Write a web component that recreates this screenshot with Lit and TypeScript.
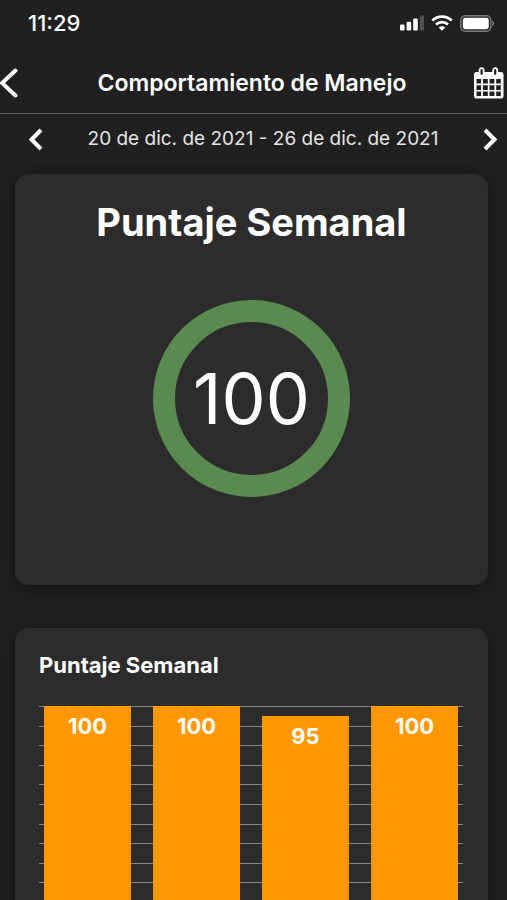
import { LitElement, html, css, svg } from "lit";
import { customElement, property } from "lit/decorators.js";

const chevron = (direction: "left" | "right") => svg`
  <path
    d=${direction === "left" ? "M15 5 L5.5 14.5 L15 24" : "M5 5 L14.5 14.5 L5 24"}
    fill="none" stroke="currentColor" stroke-width="4" stroke-linecap="butt" stroke-linejoin="miter" />
`;

@customElement("status-bar")
class StatusBar extends LitElement {
  static styles = css`
    :host {
      display: flex;
      align-items: center;
      justify-content: space-between;
      height: 46px;
      padding: 0 12px 0 28px;
    }
    .time {
      font-size: 22px;
      font-weight: 500;
      line-height: 24px;
    }
    .indicators {
      display: flex;
      align-items: center;
      gap: 7px;
    }
    svg {
      display: block;
    }
  `;

  render() {
    return html`
      <span class="time">11:29</span>
      <div class="indicators">
        <svg width="24" height="16" viewBox="0 0 24 16" fill="#fff" role="img" aria-label="Señal">
          <rect x="0" y="9.5" width="4.6" height="6" rx="1.2" />
          <rect x="6.6" y="6.8" width="4.6" height="8.7" rx="1.2" />
          <rect x="13.2" y="3.5" width="4.6" height="12" rx="1.2" />
          <rect x="19.8" y="0.3" width="4.2" height="15.2" rx="1.2" fill="#505050" />
        </svg>
        <svg width="22" height="16" viewBox="0 0 22 16" fill="none" stroke="#fff" stroke-width="2.8" role="img" aria-label="Wi-Fi">
          <path d="M1.3 5.6 C6.6 0.3 15.4 0.3 20.7 5.6" />
          <path d="M5 9.6 C8.4 6.4 13.6 6.4 17 9.6" />
          <path d="M11 15.8 L7.6 12.4 C9.6 10.7 12.4 10.7 14.4 12.4 Z" fill="#fff" stroke="none" />
        </svg>
        <svg width="35" height="17" viewBox="0 0 35 17" role="img" aria-label="Batería">
          <rect x="0.8" y="0.8" width="30" height="15.4" rx="4.4" fill="none" stroke="#7c7c7c" stroke-width="1.4" />
          <rect x="2.8" y="2.8" width="26" height="11.4" rx="2.4" fill="#fff" />
          <path d="M32.3 5.6 C34.8 6.6 34.8 10.4 32.3 11.4 Z" fill="#7c7c7c" />
        </svg>
      </div>
    `;
  }
}

@customElement("score-ring")
class ScoreRing extends LitElement {
  @property({ type: Number }) value = 0;

  static styles = css`
    :host {
      display: grid;
      place-items: center;
      box-sizing: border-box;
      width: 197px;
      height: 197px;
      border: 22px solid #5a8a4f;
      border-radius: 50%;
    }
    .value {
      font-size: 70px;
      line-height: 80px;
      font-weight: 400;
    }
  `;

  render() {
    return html`<span class="value">${this.value}</span>`;
  }
}

@customElement("score-chart")
class ScoreChart extends LitElement {
  @property({ attribute: false }) values: number[] = [];

  static styles = css`
    :host {
      display: grid;
      height: 197px;
    }
    .grid,
    .bars {
      grid-area: 1 / 1;
    }
    .grid {
      display: flex;
      flex-direction: column;
      justify-content: space-between;
    }
    .line {
      height: 1px;
      background: #858585;
    }
    .bars {
      display: grid;
      grid-auto-flow: column;
      grid-auto-columns: 1fr;
      align-items: end;
      gap: 22px;
      padding: 0 5px;
    }
    .bar {
      box-sizing: border-box;
      padding-top: 6px;
      background: #ff9800;
      font-size: 22px;
      line-height: 28px;
      font-weight: 700;
      text-align: center;
    }
  `;

  render() {
    return html`
      <div class="grid">${Array.from({ length: 11 }, () => html`<div class="line"></div>`)}</div>
      <div class="bars">
        ${this.values.map((v) => html`<div class="bar" style="height:${v}%">${v}</div>`)}
      </div>
    `;
  }
}

@customElement("app-root")
class AppRoot extends LitElement {
  static styles = css`
    :host {
      display: flex;
      flex-direction: column;
      height: 100vh;
      overflow: hidden;
      background: #202020;
      color: #fff;
      font-family: Inter, "Liberation Sans", sans-serif;
    }
    button {
      display: block;
      padding: 0;
      border: 0;
      background: none;
      color: inherit;
      cursor: pointer;
    }
    svg {
      display: block;
    }
    .header {
      display: flex;
      align-items: center;
      justify-content: space-between;
      height: 68px;
      padding-right: 3px;
      box-sizing: border-box;
      padding-top: 6px;
      border-bottom: 1px solid #5c5c5c;
      flex: none;
    }
    .side {
      flex: 0 0 32px;
    }
    .title {
      margin: 0;
      font-size: 23px;
      line-height: 32px;
      font-weight: 600;
      white-space: nowrap;
    }
    .period {
      display: flex;
      align-items: center;
      justify-content: space-between;
      height: 50px;
      padding: 0 7px 0 26px;
      flex: none;
    }
    .range {
      color: #e4e4e4;
      font-size: 19px;
      line-height: 28px;
      white-space: nowrap;
    }
    .content {
      flex: 1;
      min-height: 0;
      overflow-y: auto;
      scrollbar-width: none;
      display: flex;
      flex-direction: column;
      gap: 43px;
      padding: 10px 19px 24px 15px;
    }
    .card {
      flex: none;
      border-radius: 14px;
      background: #2c2c2c;
      box-shadow: 0 4px 20px rgba(0, 0, 0, 0.45);
    }
    .summary {
      display: flex;
      flex-direction: column;
      align-items: center;
      gap: 54px;
      padding: 24px 24px 88px;
    }
    .headline {
      margin: 0;
      font-size: 38px;
      line-height: 48px;
      font-weight: 700;
    }
    .history {
      padding: 22px 25px 40px 24px;
    }
    .subhead {
      margin: 0 0 26px;
      font-size: 22px;
      line-height: 30px;
      font-weight: 700;
    }
  `;

  render() {
    return html`
      <status-bar></status-bar>
      <header class="header">
        <div class="side">
          <button aria-label="Volver">
            <svg width="20" height="32" viewBox="0 0 20 32">
              <path d="M15.5 3.5 L2 16 L15.5 28.5" fill="none" stroke="#fff" stroke-width="4" stroke-linecap="round" stroke-linejoin="miter" />
            </svg>
          </button>
        </div>
        <h1 class="title">Comportamiento de Manejo</h1>
        <div class="side">
          <button aria-label="Calendario">
            <svg width="32" height="32" viewBox="0 0 32 32">
              <path
                fill="#fff" fill-rule="evenodd"
                d="M4.5 5 H29 Q31.5 5 31.5 7.5 V29 Q31.5 31.5 29 31.5 H4.5 Q2 31.5 2 29 V7.5 Q2 5 4.5 5 Z
                   M4.5 12 h4.6 v4.6 h-4.6 Z M10.9 12 h4.9 v4.6 h-4.9 Z M17.5 12 h4.9 v4.6 h-4.9 Z M24.2 12 h4.6 v4.6 h-4.6 Z
                   M4.5 18.3 h4.6 v4.6 h-4.6 Z M10.9 18.3 h4.9 v4.6 h-4.9 Z M17.5 18.3 h4.9 v4.6 h-4.9 Z M24.2 18.3 h4.6 v4.6 h-4.6 Z
                   M4.5 24.6 h4.6 v4.4 h-4.6 Z M10.9 24.6 h4.9 v4.4 h-4.9 Z M17.5 24.6 h4.9 v4.4 h-4.9 Z M24.2 24.6 h4.6 v4.4 h-4.6 Z" />
              <rect x="7.6" y="1.2" width="4" height="7.6" rx="2" fill="#202020" stroke="#fff" stroke-width="1.8" />
              <rect x="21.2" y="1.2" width="4" height="7.6" rx="2" fill="#202020" stroke="#fff" stroke-width="1.8" />
            </svg>
          </button>
        </div>
      </header>
      <nav class="period" aria-label="Semana">
        <button aria-label="Semana anterior"><svg width="20" height="28" viewBox="0 0 20 28">${chevron("left")}</svg></button>
        <span class="range">20 de dic. de 2021 - 26 de dic. de 2021</span>
        <button aria-label="Semana siguiente"><svg width="20" height="28" viewBox="0 0 20 28">${chevron("right")}</svg></button>
      </nav>
      <main class="content">
        <section class="card summary">
          <h2 class="headline">Puntaje Semanal</h2>
          <score-ring .value=${100}></score-ring>
        </section>
        <section class="card history">
          <h3 class="subhead">Puntaje Semanal</h3>
          <score-chart .values=${[100, 100, 95, 100]}></score-chart>
        </section>
      </main>
    `;
  }
}
